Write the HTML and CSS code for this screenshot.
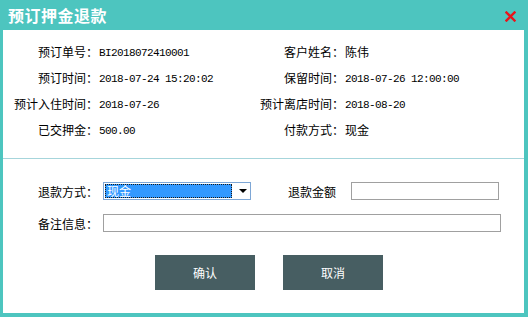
FILE: index.html
```html
<!DOCTYPE html>
<html lang="zh">
<head>
<meta charset="utf-8">
<link rel="stylesheet" href="styles.css">
</head>
<body>
<div class="dialog">
  <div class="titlebar">
    <span class="title">预订押金退款</span>
    <span class="close" aria-label="关闭">
      <svg width="11" height="11" viewBox="0 0 11 11"><path d="M1.5 1.5 L9.5 9.5 M9.5 1.5 L1.5 9.5" stroke="#e8141b" stroke-width="2.4" stroke-linecap="square"/></svg>
    </span>
  </div>
  <div class="content">
    <div class="info">
      <div class="lbl">预订单号：</div><div class="val mono">BI2018072410001</div>
      <div class="lbl">客户姓名：</div><div class="val">陈伟</div>
      <div class="lbl">预订时间：</div><div class="val mono">2018-07-24 15:20:02</div>
      <div class="lbl">保留时间：</div><div class="val mono">2018-07-26 12:00:00</div>
      <div class="lbl">预计入住时间：</div><div class="val mono">2018-07-26</div>
      <div class="lbl">预计离店时间：</div><div class="val mono">2018-08-20</div>
      <div class="lbl">已交押金：</div><div class="val mono">500.00</div>
      <div class="lbl">付款方式：</div><div class="val">现金</div>
    </div>
    <div class="sep"></div>
    <div class="form">
      <div class="frow">
        <div class="flbl">退款方式：</div>
        <div class="select">
          <div class="sel-inner"><span class="sel-text">现金</span></div>
          <div class="sel-arrow"></div>
        </div>
        <div class="flbl2">退款金额</div>
        <div class="input amount"></div>
      </div>
      <div class="frow">
        <div class="flbl">备注信息：</div>
        <div class="input remark"></div>
      </div>
      <div class="buttons">
        <div class="btn">确认</div>
        <div class="btn">取消</div>
      </div>
    </div>
  </div>
</div>
</body>
</html>
```

FILE: styles.css
```css
html, body {
  margin: 0;
  padding: 0;
  background: #ffffff;
}
body {
  font-family: "Noto Sans CJK SC", "Noto Sans", sans-serif;
  font-size: 12px;
  color: #000;
}
.dialog {
  width: 528px;
  height: 317px;
  box-sizing: border-box;
  background: #4dc5bf;
  padding: 0 4px 4px 3px;
  display: flex;
  flex-direction: column;
}
.titlebar {
  height: 30px;
  flex: none;
  display: flex;
  align-items: center;
  justify-content: space-between;
  padding: 0 8px 0 5px;
}
.title {
  color: #ffffff;
  font-size: 16px;
  font-weight: bold;
  letter-spacing: 0.5px;
  line-height: 1;
}
.close {
  display: flex;
  width: 11px;
  height: 11px;
  margin-top: 2px;
}
.content {
  flex: 1;
  background: #ffffff;
}
.info {
  display: grid;
  grid-template-columns: 95px 162px 84px 1fr;
  grid-auto-rows: 26px;
  align-items: center;
  padding-top: 9px;
  padding-bottom: 15px;
}
.lbl {
  text-align: right;
  white-space: nowrap;
  line-height: 14px;
}
.val {
  padding-left: 1px;
  white-space: nowrap;
  line-height: 14px;
}
.mono {
  font-family: "Liberation Mono", "DejaVu Sans Mono", monospace;
  font-size: 11px;
  letter-spacing: -0.6px;
  padding-top: 1px;
}
.sep {
  height: 1px;
  background: #a6d5db;
}
.form {
  padding-top: 23px;
}
.frow {
  display: flex;
  align-items: center;
  height: 18px;
  margin-bottom: 14px;
}
.flbl {
  width: 95px;
  text-align: right;
  margin-right: 5px;
  white-space: nowrap;
}
.select {
  width: 148px;
  height: 18px;
  box-sizing: border-box;
  border: 1px solid #7ea7d6;
  display: flex;
  align-items: center;
  padding: 1px;
}
.sel-inner {
  width: 127px;
  height: 14px;
  box-sizing: border-box;
  background: #3399ff;
  border: 1px dotted #1a1a1a;
  display: flex;
  align-items: center;
}
.sel-text {
  color: #ffffff;
  line-height: 12px;
  padding-left: 1px;
}
.sel-arrow {
  width: 0;
  height: 0;
  border-left: 4px solid transparent;
  border-right: 4px solid transparent;
  border-top: 4px solid #000;
  margin-left: 7px;
}
.flbl2 {
  margin-left: 37px;
  margin-right: 15px;
  white-space: nowrap;
}
.input {
  height: 18px;
  box-sizing: border-box;
  border: 1px solid #a0a0a0;
}
.amount {
  width: 148px;
}
.remark {
  width: 398px;
}
.buttons {
  display: flex;
  gap: 28px;
  padding-left: 152px;
  padding-top: 9px;
}
.btn {
  width: 100px;
  height: 35px;
  background: #475e62;
  color: #ffffff;
  display: flex;
  align-items: center;
  justify-content: center;
  font-size: 12px;
}
```
